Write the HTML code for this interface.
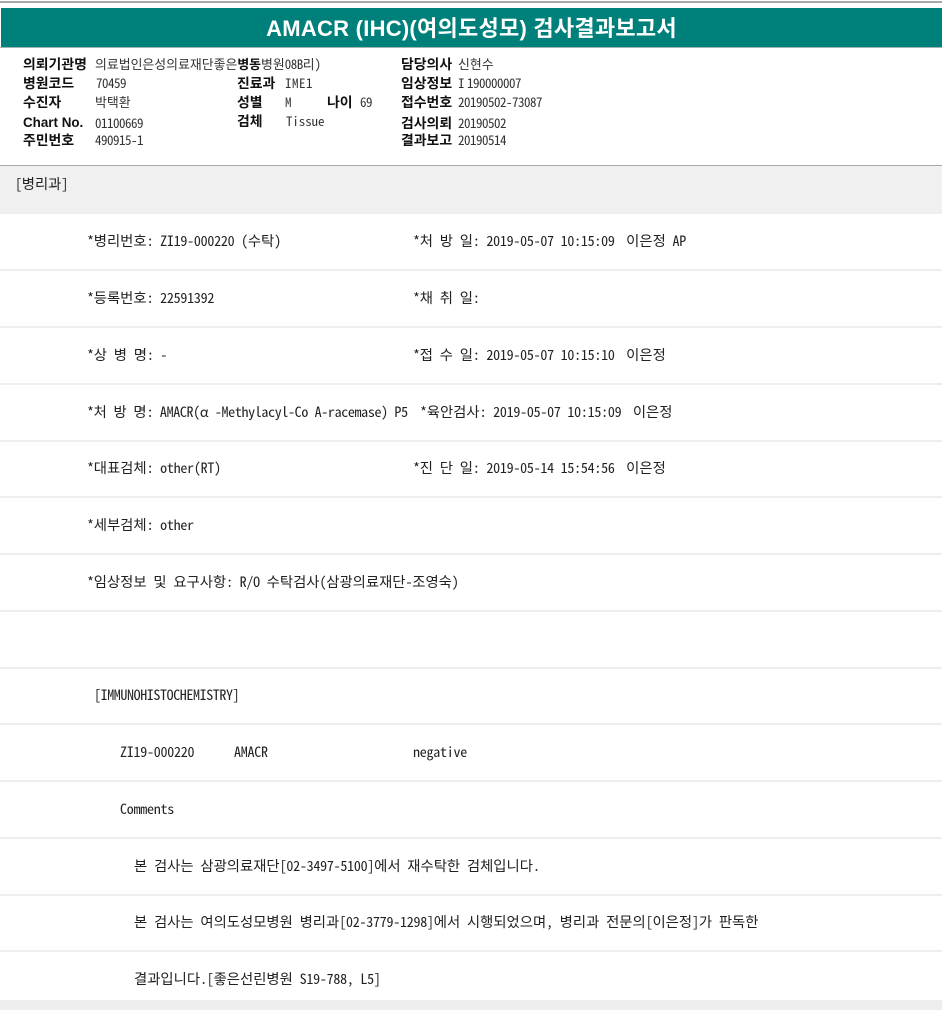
<!DOCTYPE html>
<html><head><meta charset="utf-8">
<style>
html,body{margin:0;padding:0;background:#fff}
#p{position:relative;width:942px;height:1010px;overflow:hidden;background:#fff;font-family:"Noto Sans Mono CJK KR","Noto Sans CJK KR",monospace;color:#222}
#p div{position:absolute}
i{font-style:normal}
.t{white-space:pre;font-size:14px;letter-spacing:-.25px;line-height:16px;height:16px}
.t i{font-size:14.37px;letter-spacing:0}
.t i.n{margin-left:-2px}
.l{left:0;width:942px;height:2px;background:#eee}
.b{white-space:pre;font-family:"Liberation Sans","Noto Sans CJK KR",sans-serif;font-weight:700;font-size:13.9px;line-height:16px;color:#111}
.v{white-space:pre;font-size:13px;letter-spacing:-.5px;line-height:16px;color:#333}
.v i{font-size:12.9px;letter-spacing:0}
.v b{font-size:12.9px;letter-spacing:0;color:#111}
</style></head><body><div id="p">
<div style="left:0;top:1px;width:942px;height:2px;background:#a9a9a9"></div>
<div style="left:1px;top:8px;width:941px;height:39px;background:#00807a"></div>
<div style="left:0;top:47px;width:942px;height:1px;background:#9fb5b3"></div>
<div style="left:1px;top:8px;width:941px;height:39px;line-height:41px;text-align:center;color:#fff;font-family:'Liberation Sans','Noto Sans CJK KR',sans-serif;font-weight:700;font-size:22px;letter-spacing:.25px">AMACR (IHC)(여의도성모) 검사결과보고서</div>

<div class="b" style="left:23px;top:56px">의뢰기관명</div>
<div class="v" style="left:95px;top:56px"><i>의료법인은성의료재단좋은</i><b>병동</b><i>병원</i>08B<i>리</i>)</div>
<div class="b" style="left:23px;top:75px">병원코드</div><div class="v" style="left:96px;top:75px">70459</div>
<div class="b" style="left:23px;top:94px">수진자</div><div class="v" style="left:95px;top:94px"><i>박택환</i></div>
<div class="b" style="left:23px;top:115px;font-size:13.4px">Chart No.</div><div class="v" style="left:95px;top:115px">01100669</div>
<div class="b" style="left:23px;top:132px">주민번호</div><div class="v" style="left:95px;top:132px">490915-1</div>

<div class="b" style="left:237px;top:75px">진료과</div><div class="v" style="left:285px;top:75px;letter-spacing:.5px">IME1</div>
<div class="b" style="left:237px;top:94px">성별</div><div class="v" style="left:285px;top:94px">M</div>
<div class="b" style="left:327px;top:94px">나이</div><div class="v" style="left:360px;top:94px">69</div>
<div class="b" style="left:237px;top:113px">검체</div><div class="v" style="left:286px;top:113px;letter-spacing:-.1px">Tissue</div>

<div class="b" style="left:401px;top:56px">담당의사</div><div class="v" style="left:458px;top:56px"><i>신현수</i></div>
<div class="b" style="left:401px;top:75px">임상정보</div><div class="v" style="left:458px;top:75px"><span style="letter-spacing:-2px">I </span>190000007</div>
<div class="b" style="left:401px;top:94px">접수번호</div><div class="v" style="left:458px;top:94px">20190502-73087</div>
<div class="b" style="left:401px;top:115px">검사의뢰</div><div class="v" style="left:458px;top:115px">20190502</div>
<div class="b" style="left:401px;top:132px">결과보고</div><div class="v" style="left:458px;top:132px">20190514</div>

<div style="left:0;top:165px;width:942px;height:1px;background:#a9a9a9"></div>
<div style="left:0;top:166px;width:942px;height:47px;background:#f0f0f0"></div>
<div class="t" style="left:15px;top:176px">[<i>병리과</i>]</div>

<div class="l" style="top:212px"></div>
<div class="l" style="top:269px"></div>
<div class="l" style="top:326px"></div>
<div class="l" style="top:383px"></div>
<div class="l" style="top:440px"></div>
<div class="l" style="top:496px"></div>
<div class="l" style="top:553px"></div>
<div class="l" style="top:610px"></div>
<div class="l" style="top:667px"></div>
<div class="l" style="top:723px"></div>
<div class="l" style="top:780px"></div>
<div class="l" style="top:837px"></div>
<div class="l" style="top:894px"></div>
<div class="l" style="top:950px"></div>
<div style="left:0;top:1000px;width:942px;height:10px;background:#eee"></div>

<div class="t" style="left:87px;top:233px">*<i>병리번호</i>: ZI19-000220 (<i>수탁</i>)</div>
<div class="t" style="left:413px;top:233px">*<i>처</i> <i>방</i> <i>일</i>: 2019-05-07 10:15:09  <i class="n">이은정</i> AP</div>
<div class="t" style="left:87px;top:290px">*<i>등록번호</i>: 22591392</div>
<div class="t" style="left:413px;top:290px">*<i>채</i> <i>취</i> <i>일</i>:</div>
<div class="t" style="left:87px;top:347px">*<i>상</i> <i>병</i> <i>명</i>: -</div>
<div class="t" style="left:413px;top:347px">*<i>접</i> <i>수</i> <i>일</i>: 2019-05-07 10:15:10  <i class="n">이은정</i></div>
<div class="t" style="left:87px;top:404px;letter-spacing:-.35px">*<i>처</i> <i>방</i> <i>명</i>: AMACR(α -Methylacyl-Co A-racemase) P5</div>
<div class="t" style="left:420px;top:404px">*<i>육안검사</i>: 2019-05-07 10:15:09  <i class="n">이은정</i></div>
<div class="t" style="left:87px;top:460px">*<i>대표검체</i>: other(RT)</div>
<div class="t" style="left:413px;top:460px">*<i>진</i> <i>단</i> <i>일</i>: 2019-05-14 15:54:56  <i class="n">이은정</i></div>
<div class="t" style="left:87px;top:517px">*<i>세부검체</i>: other</div>
<div class="t" style="left:87px;top:574px">*<i>임상정보</i> <i>및</i> <i>요구사항</i>: R/O <i>수탁검사</i>(<i>삼광의료재단</i>-<i>조영숙</i>)</div>
<div class="t" style="left:94px;top:687px;letter-spacing:-.4px">[IMMUNOHISTOCHEMISTRY]</div>
<div class="t" style="left:120px;top:744px">ZI19-000220</div>
<div class="t" style="left:234px;top:744px">AMACR</div>
<div class="t" style="left:413px;top:744px">negative</div>
<div class="t" style="left:120px;top:801px">Comments</div>
<div class="t" style="left:134px;top:858px"><i>본</i> <i>검사는</i> <i>삼광의료재단</i>[02-3497-5100]<i>에서</i> <i>재수탁한</i> <i>검체입니다</i>.</div>
<div class="t" style="left:134px;top:914px"><i>본</i> <i>검사는</i> <i>여의도성모병원</i> <i>병리과</i>[02-3779-1298]<i>에서</i> <i>시행되었으며</i>, <i>병리과</i> <i>전문의</i>[<i>이은정</i>]<i>가</i> <i>판독한</i></div>
<div class="t" style="left:134px;top:971px"><i>결과입니다</i>.[<i>좋은선린병원</i> S19-788, L5]</div>
</div></body></html>
